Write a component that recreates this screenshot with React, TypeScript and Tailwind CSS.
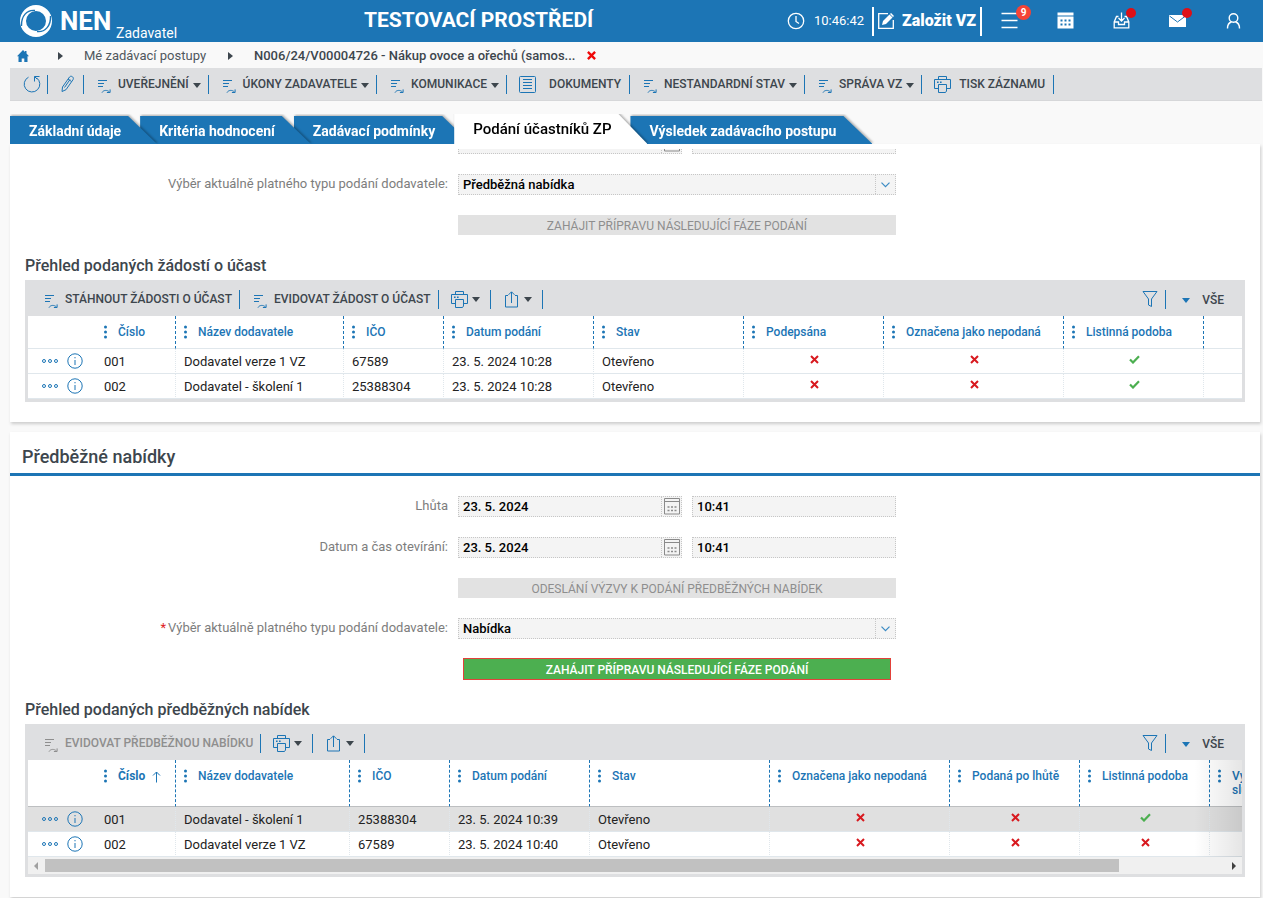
import React from 'react';

type IconProps = { className?: string };

const ActionIcon = ({ className = '' }: IconProps) => (
  <svg className={`shrink-0 ${className}`} width="14" height="15" viewBox="0 0 14 15" fill="none" stroke="currentColor">
    <path d="M0 1.500h9M0 4.500h6M0 7.500h5" strokeWidth="1.100" />
    <path d="M4 13.600c1.400-2.600 5-3 7.500-.6M12.100 10.400v3.100H8.900" />
  </svg>
);

const PrinterIcon = () => (
  <svg className="shrink-0 text-[#1c75b5]" width="17" height="17" viewBox="0 0 17 17" fill="none" stroke="currentColor">
    <path d="M4.500 3.500v-3h8v3M4 12.500H.5v-9h16v9H13" />
    <path d="M4.500 8.500h8v6.500l-1 1.500h-7z" />
    <path d="M3 6.200h1.600M6 6.200h1.600" strokeWidth="1.500" />
  </svg>
);

const ShareIcon = () => (
  <svg className="shrink-0 text-[#1c75b5]" width="17" height="17" viewBox="0 0 17 17" fill="none" stroke="currentColor">
    <path d="M5 4.500H2.500v11.500h12V4.500H12M8.500 12V1M5.500 3.800 8.500.8l3 3" />
  </svg>
);

const FilterIcon = () => (
  <svg width="16" height="16" viewBox="0 0 16 16" fill="none" stroke="currentColor">
    <path d="M1 .5h14L9.500 8v7.500L6.500 14V8z" />
  </svg>
);

const DocumentIcon = () => (
  <svg className="shrink-0 text-[#1c75b5]" width="17" height="17" viewBox="0 0 17 17" fill="none" stroke="currentColor">
    <rect x=".5" y=".5" width="16" height="16" rx="1" />
    <path d="M4 3.500h9M4 6.500h9M4 9.500h9M4 12.500h9" />
  </svg>
);

const CalendarIcon = () => (
  <svg width="16" height="17" viewBox="0 0 16 17" fill="none" stroke="#8a8a8a">
    <path d="M.5.500h15v15.500H.5zM.5 3.500h15" />
    <path d="M3.500 9h9M3.500 12.500h9" strokeDasharray="2 1.500" strokeWidth="1.500" />
  </svg>
);

const Caret = ({ className = 'text-[#3d464d]' }: IconProps) => (
  <svg className={`shrink-0 ${className}`} width="8" height="5" viewBox="0 0 8 5" fill="currentColor">
    <path d="M0 0h8L4 5z" />
  </svg>
);

const BreadcrumbArrow = () => (
  <svg className="shrink-0" width="5" height="8" viewBox="0 0 5 8" fill="#3d464d">
    <path d="M0 0l5 4-5 4z" />
  </svg>
);

const Cross = () => (
  <svg className="inline-block" width="9" height="9" viewBox="0 0 9 9" stroke="#d8191f" strokeWidth="2">
    <path d="M1 1l7 7M8 1L1 8" />
  </svg>
);

const Check = () => (
  <svg className="inline-block" width="11" height="9" viewBox="0 0 11 9" fill="none" stroke="#4caf50" strokeWidth="2.200">
    <path d="M1 4.500l3 3L10 1.200" />
  </svg>
);

const Chevron = () => (
  <svg width="9" height="6" viewBox="0 0 9 6" fill="none" stroke="#3b8bc4" strokeWidth="1.200">
    <path d="M.5.700l4 4 4-4" />
  </svg>
);

const Kebab = () => (
  <svg className="shrink-0" width="3" height="14" viewBox="0 0 3 14" fill="currentColor">
    <circle cx="1.500" cy="2" r="1.500" />
    <circle cx="1.500" cy="7" r="1.500" />
    <circle cx="1.500" cy="12" r="1.500" />
  </svg>
);

const HEADER_ICONS = [
  {
    label: 'Seznam úkolů',
    badge: '9',
    dot: false,
    icon: <path d="M0 1h16M0 8h16M0 15h16" stroke="currentColor" strokeWidth="1.600" />,
  },
  {
    label: 'Kalendář',
    badge: '',
    dot: false,
    icon: (
      <g fill="currentColor">
        <path d="M0 0h16v3H0z" />
        <path fillRule="evenodd" d="M0 4h16v12H0zM3 7v2h2V7zm4 0v2h2V7zm4 0v2h2V7zM3 11v2h2v-2zm4 0v2h2v-2zm4 0v2h2v-2z" />
      </g>
    ),
  },
  {
    label: 'Doručené',
    badge: '',
    dot: true,
    icon: (
      <path
        d="M5 4H3L.7 9.500V15.300h14.600V9.500L13 4h-2M.7 9.500H5v2.500h6V9.500h4.300M8 0v8M5 5.500l3 3 3-3"
        fill="none"
        stroke="currentColor"
        strokeWidth="1.300"
      />
    ),
  },
  {
    label: 'Zprávy',
    badge: '',
    dot: true,
    icon: (
      <g>
        <path d="M-.5 2.500h17v12h-17z" fill="currentColor" />
        <path d="M0 3.500l8 6 8-6" fill="none" stroke="#1c75b5" />
      </g>
    ),
  },
  {
    label: 'Uživatel',
    badge: '',
    dot: false,
    icon: (
      <g fill="none" stroke="currentColor" strokeWidth="1.400">
        <circle cx="8" cy="5.500" r="4.300" />
        <path d="M2 16c0-4 2-6 4-6.500M14 16c0-4-2-6-4-6.500" />
      </g>
    ),
  },
];

const Header = () => (
  <header className="h-[42px] bg-[#1c75b5] text-white flex items-center">
    <div className="w-[364px] shrink-0 pl-5 flex items-center h-full">
      <svg width="32" height="32" viewBox="0 0 32 32" fill="none">
        <circle cx="16" cy="16" r="13" stroke="white" strokeWidth="6" />
        <path d="M1.500 21C1 11 7 4.500 15 5.500M30.500 11c.5 10-5.500 16.500-13.500 15.500" stroke="#1c75b5" strokeWidth="1.400" />
      </svg>
      <span className="w-16 pl-2 text-[26px] font-bold">NEN</span>
      <span className="self-end text-sm leading-[18px]">Zadavatel</span>
    </div>
    <h1 className="text-[21px] font-bold whitespace-nowrap">TESTOVACÍ PROSTŘEDÍ</h1>
    <div className="ml-auto flex items-center pr-px">
      <svg className="mr-[9px]" width="18" height="18" viewBox="0 0 18 18" fill="none" stroke="currentColor" strokeWidth="1.300">
        <circle cx="9" cy="9" r="7.700" />
        <path d="M9 4v5.500l3 2" />
      </svg>
      <time className="w-[58px] text-[13px]">10:46:42</time>
      <button className="h-[29px] w-[110px] border-x-2 border-white flex items-center gap-2 pl-1 text-base font-black whitespace-nowrap">
        <svg className="shrink-0" width="16" height="16" viewBox="0 0 16 16" fill="none" stroke="currentColor">
          <path d="M10 .700H.7v14.600h14.600V7" strokeWidth="1.300" />
          <path d="M4 12l1-4 6.500-6.500 3 3L8 11z" fill="currentColor" stroke="none" />
          <path d="M12.500.500l3 3" strokeWidth="1.500" />
        </svg>
        Založit VZ
      </button>
      {HEADER_ICONS.map((item) => (
        <button
          key={item.label}
          aria-label={item.label}
          className="relative w-14 h-[42px] pr-0.5 pb-0.5 flex items-center justify-center"
        >
          <svg width="17" height="17" viewBox="-.5 -.5 17 17">{item.icon}</svg>
          {item.badge && (
            <span className="absolute top-[5px] right-[7px] w-[15px] h-[15px] rounded-full bg-[#f44336] text-[10px] leading-[15px] font-bold text-center">
              {item.badge}
            </span>
          )}
          {item.dot && <span className="absolute top-2 right-[14px] w-2.5 h-2.5 rounded-full bg-[#dd1017]" />}
        </button>
      ))}
    </div>
  </header>
);

const Breadcrumb = () => (
  <nav className="h-[26px] pl-[17px] pt-px flex items-center text-[13px] text-[#50575d]">
    <a href="#" aria-label="Domů" className="w-[41px]">
      <svg width="12" height="12" viewBox="0 0 12 12" fill="#1c75b5">
        <path d="M6 0l2 2V1h1.500v2.500L12 6.300h-1.500V12H7.300V8.500H4.700V12H1.500V6.300H0z" />
      </svg>
    </a>
    <BreadcrumbArrow />
    <a href="#" className="w-[165px] pl-[21px] whitespace-nowrap">Mé zadávací postupy</a>
    <BreadcrumbArrow />
    <span className="pl-[21px] font-medium text-[#3d464d] whitespace-nowrap">
      N006/24/V00004726 - Nákup ovoce a ořechů (samos...
    </span>
    <button aria-label="Zavřít" className="pl-3">
      <svg width="9" height="9" viewBox="0 0 10 10" stroke="#f00808" strokeWidth="2.600">
        <path d="M1 1l8 8M9 1L1 9" />
      </svg>
    </button>
  </nav>
);

const barItem = 'h-[19px] flex items-center border-r border-[#1c75b5] whitespace-nowrap';

interface ActionButtonProps {
  label: string;
  menu?: boolean;
  disabled?: boolean;
  icon?: React.ReactNode;
}

const ActionButton = ({ label, menu = false, disabled = false, icon }: ActionButtonProps) => (
  <button disabled={disabled} className={`${barItem} ${icon ? 'pl-3 pr-2 gap-2' : 'pl-[14px] pr-[7px] gap-1.5'}`}>
    {icon ?? <ActionIcon className={disabled ? 'mt-1 text-[#8e8e8e]' : 'mt-1 text-[#1c75b5]'} />}
    <span className={disabled ? 'text-[#8e8e8e]' : ''}>{label}</span>
    {menu && <Caret className="-ml-0.5 mt-0.5 text-[#3d464d]" />}
  </button>
);

const Toolbar = () => (
  <div className="ml-2.5 mr-px h-[33px] bg-[#dedfe1] border-b border-[#d6d7d9] flex items-center text-xs font-medium text-[#3d464d]">
    <button aria-label="Obnovit" className={`${barItem} w-[38px] pl-[13px] text-[#1c75b5]`}>
      <svg width="18" height="18" viewBox="0 0 18 18" fill="none" stroke="currentColor">
        <path d="M5.500 2.200a7.800 7.800 0 1 0 8 .6M16.500 1.500h-5v5M11.700 1.700l2.500 2.500" />
      </svg>
    </button>
    <button aria-label="Upravit" className={`${barItem} w-9 pl-3 text-[#1c75b5]`}>
      <svg width="16" height="18" viewBox="0 0 16 18" fill="none" stroke="currentColor">
        <path d="M2 16.500l.5-4.500L9.500 2c1.500-2 5 .3 3.500 2.700L6 14.700zM8 4l3.500 2.500M10 4.500l-5.500 8" />
      </svg>
    </button>
    <ActionButton label="UVEŘEJNĚNÍ" menu />
    <ActionButton label="ÚKONY ZADAVATELE" menu />
    <ActionButton label="KOMUNIKACE" menu />
    <ActionButton label="DOKUMENTY" icon={<span className="pr-[5px]"><DocumentIcon /></span>} />
    <ActionButton label="NESTANDARDNÍ STAV" menu />
    <ActionButton label="SPRÁVA VZ" menu />
    <ActionButton label="TISK ZÁZNAMU" icon={<PrinterIcon />} />
  </div>
);

const TABS = [
  { label: 'Základní údaje', z: 'z-40', active: false },
  { label: 'Kritéria hodnocení', z: 'z-30', active: false },
  { label: 'Zadávací podmínky', z: 'z-20', active: false },
  { label: 'Podání účastníků ZP', z: 'z-50', active: true },
  { label: 'Výsledek zadávacího postupu', z: 'z-10', active: false },
];

const Tabs = () => (
  <div role="tablist" className="mt-[13px] ml-2.5 flex items-end overflow-hidden">
    {TABS.map((tab) => (
      <div key={tab.label} className={`relative -mr-[17px] drop-shadow-[1px_-1px_1px_rgba(0,0,0,0.3)] ${tab.z}`}>
        <button
          role="tab"
          aria-selected={tab.active}
          className={`block pl-[19px] pr-9 whitespace-nowrap [clip-path:polygon(0_0,calc(100%-29px)_0,100%_100%,0_100%)] ${
            tab.active ? 'h-[30px] bg-white text-black text-[15px] font-medium' : 'h-7 pt-0.5 bg-[#1c75b5] text-white text-sm font-bold'
          }`}
        >
          {tab.label}
        </button>
      </div>
    ))}
  </div>
);

const fieldBox = 'h-[21px] flex border border-dotted border-[#c6c6c6] bg-[#f4f4f4] text-[13px] font-medium text-black';

interface FormRowProps {
  label?: string;
  htmlFor?: string;
  required?: boolean;
  children: React.ReactNode;
}

const FormRow = ({ label, htmlFor, required = false, children }: FormRowProps) => (
  <div className="grid grid-cols-[438px_minmax(0,438px)] gap-2.5">
    {label ? (
      <label htmlFor={htmlFor} className="text-right text-[13px] leading-5 text-[#7d7d7d] whitespace-nowrap">
        {required && <span className="text-[#e01b22] pr-0.5">*</span>}
        {label}
      </label>
    ) : (
      <span />
    )}
    {children}
  </div>
);

const DateTimeField = ({ id, date, time }: { id: string; date: string; time: string }) => (
  <div className="flex gap-2.5">
    <div className={`${fieldBox} w-56`}>
      <input id={id} className="flex-1 min-w-0 px-1 outline-none" defaultValue={date} />
      <button aria-label="Vybrat datum" className="w-5 border-l border-dotted border-[#c6c6c6] flex items-center justify-center">
        <CalendarIcon />
      </button>
    </div>
    <div className={`${fieldBox} flex-1`}>
      <input aria-label="Čas" className="w-full px-1 outline-none" defaultValue={time} />
    </div>
  </div>
);

const SelectField = ({ id, value }: { id: string; value: string }) => (
  <div className={fieldBox}>
    <select id={id} className="flex-1 appearance-none px-1 outline-none" defaultValue={value}>
      <option>{value}</option>
    </select>
    <span className="w-5 border-l border-dotted border-[#c6c6c6] flex items-center justify-center">
      <Chevron />
    </span>
  </div>
);

const DisabledButton = ({ label }: { label: string }) => (
  <button disabled className="h-5 pt-0.5 bg-[#e2e2e2] text-xs text-[#8e8e8e]">{label}</button>
);

const GridToolbar = ({ children }: { children: React.ReactNode }) => (
  <div className="h-9 pt-0.5 pl-[3px] flex items-center text-xs font-medium text-[#3d464d]">
    {children}
    <button aria-label="Tisk" className={`${barItem} w-[52px] pl-3 gap-1`}>
      <PrinterIcon />
      <Caret />
    </button>
    <button aria-label="Export" className={`${barItem} w-[52px] pl-3 gap-1`}>
      <ShareIcon />
      <Caret />
    </button>
    <button aria-label="Filtr" className={`${barItem} ml-auto pr-[7px] text-[#1c75b5]`}>
      <FilterIcon />
    </button>
    <button className="flex items-center gap-3 pl-4 pr-[18px] pt-0.5">
      <Caret className="text-[#1c75b5]" />
      VŠE
    </button>
  </div>
);

interface Column {
  title: string;
  width?: string;
  sorted?: boolean;
}

type Cell = string | boolean;

interface DataTableProps {
  columns: Column[];
  rows: Cell[][];
  className: string;
  headClass: string;
  selected?: number;
}

const DataTable = ({ columns, rows, className, headClass, selected = -1 }: DataTableProps) => (
  <table className={`table-fixed border-separate border-spacing-0 bg-white ${className}`}>
    <thead>
      <tr className={headClass}>
        <th aria-label="Akce" className="w-[68px] border-b border-inherit" />
        {columns.map((col) => (
          <th
            key={col.title}
            className={`p-0 align-top border-b border-inherit text-left text-xs leading-[14px] font-medium text-[#1c75b5] ${
              col.title ? 'border-r border-r-[#1c75b5] [border-right-style:dashed]' : ''
            } ${col.width ?? ''}`}
          >
            {col.title && (
              <div className="pt-[9px] pl-2 flex gap-[11px]">
                <Kebab />
                <span className={`whitespace-pre-line ${col.sorted ? 'font-bold' : ''}`}>{col.title}</span>
                {col.sorted && (
                  <svg className="-ml-1 mt-0.5" width="9" height="12" viewBox="0 0 9 12" fill="none" stroke="currentColor">
                    <path d="M4.500 11.500V1M1 4.500L4.500 1 8 4.500" />
                  </svg>
                )}
              </div>
            )}
          </th>
        ))}
      </tr>
    </thead>
    <tbody>
      {rows.map((row, i) => (
        <tr key={i} className={`h-[25px] text-[13px] text-[#222] ${i === selected ? 'bg-[#e0e0e0]' : ''}`}>
          <td className="p-0 border-b border-[#e0e7ec]">
            <div className="pl-[14px] flex items-center gap-[9px] text-[#1c75b5]">
              <button aria-label="Nabídka řádku">
                <svg width="16" height="6" viewBox="0 0 16 6" fill="none" stroke="currentColor">
                  <circle cx="2" cy="3" r="1.500" />
                  <circle cx="8" cy="3" r="1.500" />
                  <circle cx="14" cy="3" r="1.500" />
                </svg>
              </button>
              <button aria-label="Detail">
                <svg className="block" width="16" height="16" viewBox="0 0 16 16" fill="none" stroke="currentColor">
                  <circle cx="8" cy="8" r="7.200" />
                  <path d="M8 7v5M8 4v1.300" />
                </svg>
              </button>
            </div>
          </td>
          {columns.map((col, j) => (
            <td
              key={col.title}
              className={`p-0 whitespace-nowrap border-b border-[#e0e7ec] ${col.title ? 'border-r [border-right-style:dotted]' : ''} ${
                typeof row[j] === 'boolean' ? 'text-center leading-5 pb-1 pl-0.5' : 'leading-[22px] pt-0.5 pl-2'
              }`}
            >
              {row[j] === true ? <Check /> : row[j] === false ? <Cross /> : row[j]}
            </td>
          ))}
        </tr>
      ))}
    </tbody>
  </table>
);

const REQUEST_COLUMNS: Column[] = [
  { title: 'Číslo', width: 'w-20' },
  { title: 'Název dodavatele', width: 'w-[168px]' },
  { title: 'IČO', width: 'w-[100px]' },
  { title: 'Datum podání', width: 'w-[150px]' },
  { title: 'Stav', width: 'w-[150px]' },
  { title: 'Podepsána', width: 'w-[140px]' },
  { title: 'Označena jako nepodaná', width: 'w-[180px]' },
  { title: 'Listinná podoba', width: 'w-[140px]' },
  { title: '' },
];

const REQUESTS: Cell[][] = [
  ['001', 'Dodavatel verze 1 VZ', '67589', '23. 5. 2024 10:28', 'Otevřeno', false, false, true, ''],
  ['002', 'Dodavatel - školení 1', '25388304', '23. 5. 2024 10:28', 'Otevřeno', false, false, true, ''],
];

const BID_COLUMNS: Column[] = [
  { title: 'Číslo', width: 'w-20', sorted: true },
  { title: 'Název dodavatele', width: 'w-[174px]' },
  { title: 'IČO', width: 'w-[100px]' },
  { title: 'Datum podání', width: 'w-[140px]' },
  { title: 'Stav', width: 'w-[180px]' },
  { title: 'Označena jako nepodaná', width: 'w-[180px]' },
  { title: 'Podaná po lhůtě', width: 'w-[130px]' },
  { title: 'Listinná podoba', width: 'w-[130px]' },
  { title: 'Vy\nslu', width: 'w-[130px]' },
];

const BIDS: Cell[][] = [
  ['001', 'Dodavatel - školení 1', '25388304', '23. 5. 2024 10:39', 'Otevřeno', false, false, true, ''],
  ['002', 'Dodavatel verze 1 VZ', '67589', '23. 5. 2024 10:40', 'Otevřeno', false, false, false, ''],
];

const Scrollbar = () => (
  <div className="h-[17px] bg-[#f0f0f0] flex items-center">
    <svg className="shrink-0" width="17" height="8" viewBox="0 0 17 8" fill="#a0a0a0">
      <path d="M10 0v8L6 4z" />
    </svg>
    <div className="flex-1">
      <div className="h-[13px] w-[91%] bg-[#c1c1c1]" />
    </div>
    <svg className="shrink-0" width="17" height="8" viewBox="0 0 17 8" fill="#404040">
      <path d="M7 0v8l4-4z" />
    </svg>
  </div>
);

const panel = 'ml-2.5 mr-[3px] bg-white shadow-[1px_2px_3px_rgba(0,0,0,0.18)]';
const gridTitle = 'h-[45px] pt-[17px] pl-[15px] text-base leading-7 font-medium text-[#3d464d]';
const gridBox = 'ml-[15px] mr-[15px] bg-[#dedfe1] border-x-[3px] border-b-[3px] border-[#dedfe1]';

const App = () => {
  return (
    <div className="min-h-screen bg-[#f9f9f9] font-[Roboto,sans-serif]">
      <Header />
      <Breadcrumb />
      <Toolbar />
      <Tabs />

      <section className={`${panel} pt-[5px] pb-5`}>
        <div className="overflow-hidden">
          <div className="-mt-4 flex flex-col gap-5">
            <FormRow>
              <DateTimeField id="requests-opening" date="" time="" />
            </FormRow>
            <FormRow label="Výběr aktuálně platného typu podání dodavatele:" htmlFor="requests-type">
              <SelectField id="requests-type" value="Předběžná nabídka" />
            </FormRow>
            <FormRow>
              <DisabledButton label="ZAHÁJIT PŘÍPRAVU NÁSLEDUJÍCÍ FÁZE PODÁNÍ" />
            </FormRow>
          </div>
        </div>
        <h3 className={gridTitle}>Přehled podaných žádostí o účast</h3>
        <div className={gridBox}>
          <GridToolbar>
            <ActionButton label="STÁHNOUT ŽÁDOSTI O ÚČAST" />
            <ActionButton label="EVIDOVAT ŽÁDOST O ÚČAST" />
          </GridToolbar>
          <DataTable className="w-full" headClass="h-[33px] border-[#e0e7ec]" columns={REQUEST_COLUMNS} rows={REQUESTS} />
        </div>
      </section>

      <section className={`${panel} mt-2.5 pb-5`}>
        <h2 className="h-11 pl-3 pt-[11px] text-lg leading-7 font-medium text-[#3d464d] border-b-[3px] border-[#1c75b5]">
          Předběžné nabídky
        </h2>
        <div className="pt-5 flex flex-col gap-5">
          <FormRow label="Lhůta" htmlFor="bids-deadline">
            <DateTimeField id="bids-deadline" date="23. 5. 2024" time="10:41" />
          </FormRow>
          <FormRow label="Datum a čas otevírání:" htmlFor="bids-opening">
            <DateTimeField id="bids-opening" date="23. 5. 2024" time="10:41" />
          </FormRow>
          <FormRow>
            <DisabledButton label="ODESLÁNÍ VÝZVY K PODÁNÍ PŘEDBĚŽNÝCH NABÍDEK" />
          </FormRow>
          <FormRow label="Výběr aktuálně platného typu podání dodavatele:" htmlFor="bids-type" required>
            <SelectField id="bids-type" value="Nabídka" />
          </FormRow>
          <FormRow>
            <button className="h-5 mx-1.5 pt-0.5 bg-[#4caf50] outline outline-[#e2413a] text-xs font-medium text-white">
              ZAHÁJIT PŘÍPRAVU NÁSLEDUJÍCÍ FÁZE PODÁNÍ
            </button>
          </FormRow>
        </div>
        <h3 className={gridTitle}>Přehled podaných předběžných nabídek</h3>
        <div className={gridBox}>
          <GridToolbar>
            <ActionButton label="EVIDOVAT PŘEDBĚŽNOU NABÍDKU" disabled />
          </GridToolbar>
          <div className="relative overflow-hidden">
            <DataTable
              className="w-[1312px]"
              headClass="h-[47px] border-[#bdbfc1]"
              columns={BID_COLUMNS}
              rows={BIDS}
              selected={0}
            />
            {/* fade that hints at more columns to the right */}
            <div className="absolute inset-y-0 right-0 w-12 bg-linear-to-r from-transparent to-black/10 pointer-events-none" />
          </div>
          <Scrollbar />
        </div>
      </section>
    </div>
  );
};

export default App;
